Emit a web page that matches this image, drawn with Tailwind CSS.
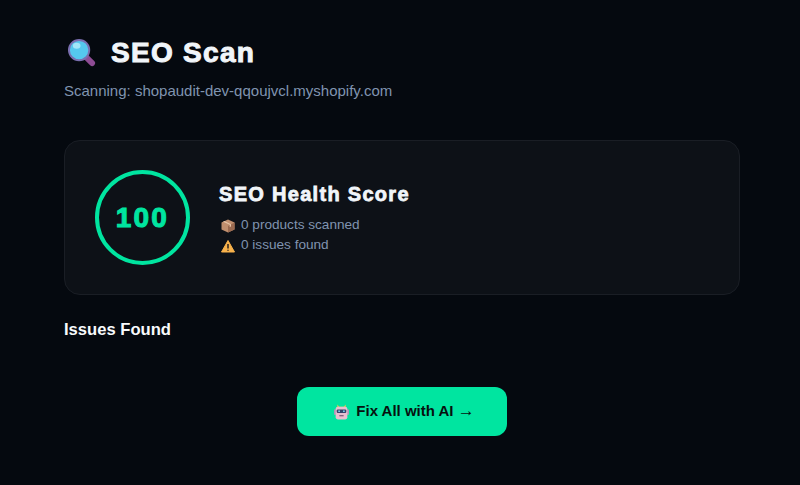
<!doctype html>
<html><head><meta charset="utf-8"><script src="https://cdn.jsdelivr.net/npm/@tailwindcss/browser@4"></script></head>
<body class="bg-[#05090f] font-['Liberation_Sans',Arial,sans-serif]">
<main class="w-[800px] h-[485px] overflow-hidden pl-[64px] pr-[60px] pt-[32px]">
  <h1 class="flex items-center h-[42px] text-[28px] font-bold text-[#f1f5f9] tracking-[1.3px] [-webkit-text-stroke:1px_#f1f5f9]">
    <svg class="ml-[3px] mr-[14px] w-[30px] h-[30px]" viewBox="0 0 31 31">
      <path d="M20 20l6 6" stroke="#8e4c94" stroke-width="6" stroke-linecap="round"/>
      <circle cx="12.500" cy="12.500" r="10.500" fill="#55c8ee" stroke="#7a6fb0" stroke-width="2"/>
      <ellipse cx="10" cy="8" rx="4" ry="3" fill="#a3e6f8"/>
    </svg>
    SEO Scan
  </h1>
  <p class="mt-[5px] text-[15px] leading-[24px] text-[#8094b0]">Scanning: shopaudit-dev-qqoujvcl.myshopify.com</p>
  <section class="mt-[37px] h-[155px] flex items-center gap-[29px] px-[30px] rounded-[16px] bg-[#0d1117] border border-[#1a1e25]">
    <div class="w-[95px] h-[95px] shrink-0 rounded-full border-4 border-[#00e5a0] flex items-center justify-center text-[#00e5a0] text-[28px] font-bold tracking-[2.2px] [-webkit-text-stroke:1px_#00e5a0]">100</div>
    <div>
      <h2 class="text-[20px] leading-[28px] font-bold text-[#f1f5f9] tracking-[1.3px] [-webkit-text-stroke:0.8px_#f1f5f9]">SEO Health Score</h2>
      <div class="mt-[8px] flex items-center gap-[6px] h-[20px] text-[13.6px] text-[#8094b0]">
        <svg class="ml-[2px] w-[14px] h-[14px]" viewBox="0 0 14 14">
          <path d="M7 .5l6.500 3v7L7 13.500.5 10.500v-7z" fill="#c08f6e"/>
          <path d="M7 7l6.500-3.500v7L7 13.500z" fill="#9a6a50"/>
          <path d="M3.500 2l6.500 3.200v2.300l-1.300.6V5.800L2 2.700z" fill="#e6c4a6"/>
        </svg>
        <span>0 products scanned</span>
      </div>
      <div class="flex items-center gap-[6px] h-[20px] text-[13.6px] text-[#8094b0]">
        <svg class="ml-[2px] w-[14px] h-[14px]" viewBox="0 0 14 14">
          <path d="M7 1.500L13.500 13H.5z" fill="#f7b24c" stroke="#f7b24c" stroke-linejoin="round"/>
          <path d="M7 5v4.500M7 10.800v1" stroke="#2b2118" stroke-width="1.500"/>
        </svg>
        <span>0 issues found</span>
      </div>
    </div>
  </section>
  <h3 class="mt-[24px] text-[16.6px] leading-[22px] font-bold text-[#f8fafc]">Issues Found</h3>
  <div class="mt-[46px] flex justify-center">
    <button class="w-[210px] h-[49px] pl-[4px] rounded-[12px] bg-[#00e5a0] flex items-center justify-center gap-[6px] text-[15px] font-bold text-[#07110f]">
      <svg class="w-[17px] h-[17px]" viewBox="0 0 16 16">
        <path d="M4 1.500l2 2h4l2-2v3H4z" fill="#d8c94f"/>
        <path d="M1 6h2v5H1zM13 6h2v5h-2z" fill="#b792b8"/>
        <rect x="2.500" y="3.500" width="11" height="12" rx="2" fill="#e8bfd0"/>
        <rect x="3.500" y="6" width="9" height="3.500" rx="1" fill="#33436b"/>
        <rect x="5" y="7" width="1.500" height="1.500" fill="#7fd8f0"/>
        <rect x="9.500" y="7" width="1.500" height="1.500" fill="#7fd8f0"/>
        <rect x="6" y="11.500" width="4" height="1" fill="#6a4a6a"/>
      </svg>
      <span>Fix All with AI <span class="font-normal text-[17px] leading-none">→</span></span>
    </button>
  </div>
</main>
</body></html>
